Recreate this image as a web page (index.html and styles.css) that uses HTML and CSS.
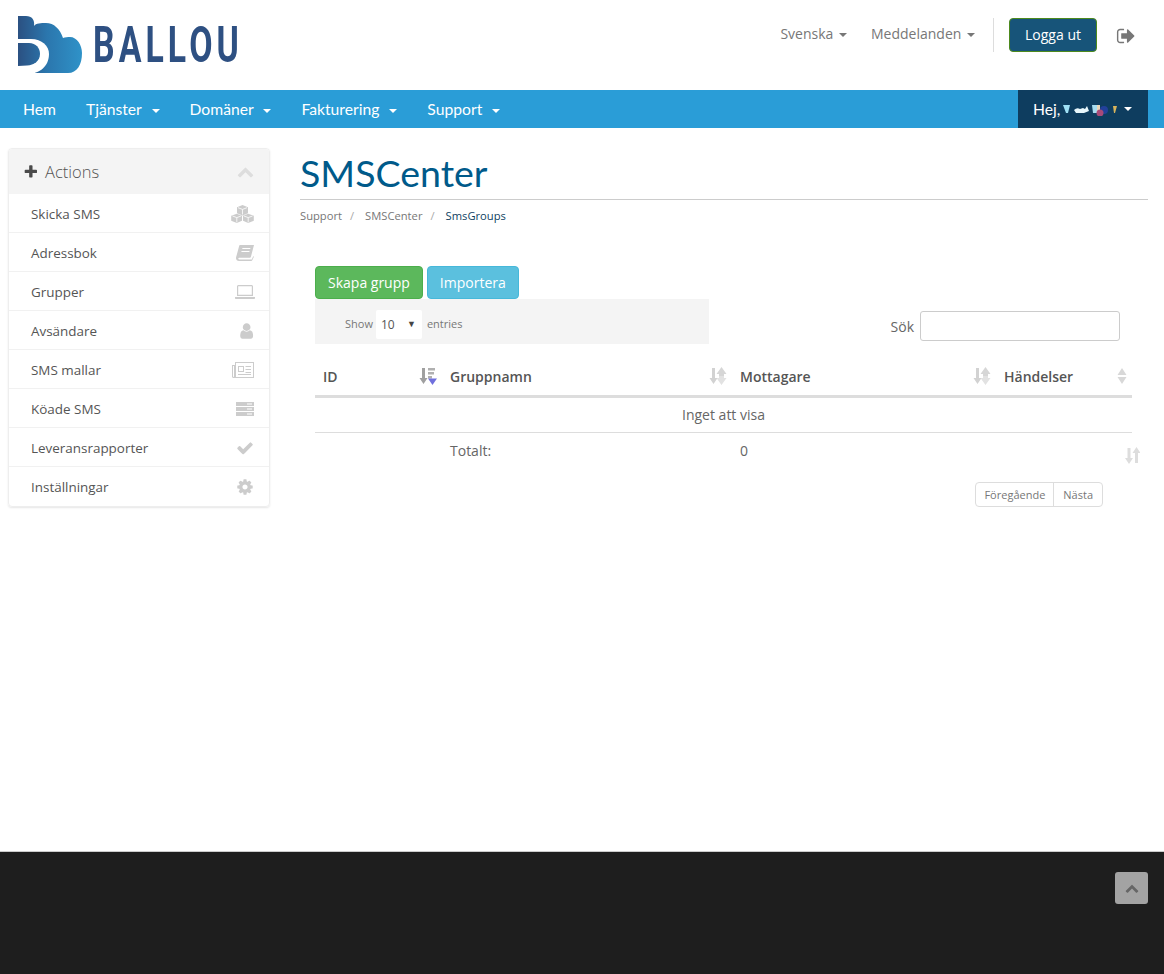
FILE: index.html
```html
<!DOCTYPE html>
<html lang="sv">
<head>
<meta charset="utf-8">
<title>SMSCenter</title>
<link rel="stylesheet" href="styles.css">
</head>
<body>
<svg class="defs" width="0" height="0" aria-hidden="true">
  <defs>
    <linearGradient id="lg" gradientUnits="userSpaceOnUse" x1="0" x2="66" y1="0" y2="0">
      <stop offset="0" stop-color="#2b4f80"/>
      <stop offset="0.45" stop-color="#2b76ad"/>
      <stop offset="1" stop-color="#2f93c9"/>
    </linearGradient>
    <symbol id="sort-both" viewBox="0 0 18 18">
      <path d="M3 1h3v10h2.500l-4 6-4-6H3z" fill="#d2d2d2"/>
      <path d="M12.500 0l5 7h-2.500v2H10V7H7.500z" fill="#d6d6d6"/>
      <path d="M12.500 18l5-7h-2.500V9H10v2H7.500z" fill="#e2e2e2"/>
    </symbol>
    <symbol id="sort-amount" viewBox="0 0 18 18">
      <path d="M3 1h3v10h2.500l-4 6-4-6H3z" fill="#a0a0a0"/>
      <path d="M9 1h7v2.500H9zM9 5h6v2.500H9zM9 9h4v2.500H9z" fill="#b0b0b0"/>
      <path d="M9 11.500h9L13.500 18z" fill="#7070dd"/>
    </symbol>
  </defs>
</svg>

<header class="topbar">
  <a class="logo" href="#">
    <svg class="logo-mark" viewBox="0 0 66 58" aria-hidden="true">
      <path fill="url(#lg)" d="M1 0H9C15 0 18 4 17 10C19 7 24 7 29 7C37 7 43 13 46 22C48 21 51 21 53 21C60 21 65 29 65 37C65 49 60 57 51 57H17C10 57 5 55 1 52Z"/>
      <path fill="#fff" d="M0 23H14C25 23 32 30 32 38C32 50 23 58 10 58H0Z"/>
      <path fill="url(#lg)" d="M1 27H12C19 27 23 32 23 38C23 45 17 49 10 49.500L1 50Z"/>
    </svg>
    <span class="logo-text">BALLOU</span>
  </a>
  <div class="top-right">
    <a class="top-link" href="#">Svenska <i class="caret"></i></a>
    <a class="top-link" href="#">Meddelanden <i class="caret"></i></a>
    <span class="top-divider"></span>
    <a class="logout" href="#">Logga ut</a>
    <svg class="signout" viewBox="0 0 1664 1792" aria-hidden="true"><path d="M704 1440q0 4 1 20t.5 26.500-3 23.500-10 19.500-20.500 6.500h-320q-119 0-203.500-84.500t-84.500-203.500v-704q0-119 84.500-203.500t203.500-84.500h320q13 0 22.500 9.500t9.500 22.500q0 4 1 20t.5 26.500-3 23.500-10 19.500-20.500 6.500h-320q-66 0-113 47t-47 113v704q0 66 47 113t113 47h312l11.500 1 11.500 3 8 5.500 7 9 2 13.500zm928-544q0 26-19 45l-544 544q-19 19-45 19t-45-19-19-45v-288h-448q-26 0-45-19t-19-45v-384q0-26 19-45t45-19h448v-288q0-26 19-45t45-19 45 19l544 544q19 19 19 45z"/></svg>
  </div>
</header>

<nav class="mainnav">
  <ul class="nav-list">
    <li><a href="#">Hem</a></li>
    <li><a href="#">Tjänster <i class="caret"></i></a></li>
    <li><a href="#">Domäner <i class="caret"></i></a></li>
    <li><a href="#">Fakturering <i class="caret"></i></a></li>
    <li><a href="#">Support <i class="caret"></i></a></li>
  </ul>
  <a class="hello" href="#">Hej,
    <svg class="blur-name" viewBox="0 0 56 13" aria-hidden="true">
      <path d="M0 2l7 0-2 8-2 0z" fill="#9fe0f5"/>
      <path d="M11 7q3-3 6-1l3-1 2 1 2-3 2 5-5 2-8 0z" fill="#e8f7fc"/>
      <path d="M29 2h5v8h-4z" fill="#a6dcf0"/>
      <path d="M34 2h3v7h-3z" fill="#e9d6b8"/>
      <circle cx="41" cy="7" r="4" fill="#22409a"/>
      <circle cx="37" cy="10" r="3.500" fill="#a84a78"/>
      <path d="M50 3h4l-2 7-1 0z" fill="#d8b45c"/>
    </svg>
    <i class="caret"></i></a>
</nav>

<main class="page">
  <aside class="side">
    <div class="panel-head">
      <svg class="ic-plus" viewBox="0 0 1600 1792" aria-hidden="true"><path d="M1600 736v192q0 40-28 68t-68 28h-416v416q0 40-28 68t-68 28h-192q-40 0-68-28t-28-68v-416h-416q-40 0-68-28t-28-68v-192q0-40 28-68t68-28h416v-416q0-40 28-68t68-28h192q40 0 68 28t28 68v416h416q40 0 68 28t28 68z"/></svg>
      <span class="panel-title">Actions</span>
      <svg class="ic-up" viewBox="0 0 1792 1792" aria-hidden="true"><path d="M1683 1331l-166 165q-19 19-45 19t-45-19l-531-531-531 531q-19 19-45 19t-45-19l-166-165q-19-19-19-45.500t19-45.500l742-741q19-19 45-19t45 19l742 741q19 19 19 45.500t-19 45.500z"/></svg>
    </div>
    <a class="side-item" href="#">Skicka SMS
      <svg class="ic" viewBox="0 0 23 18" aria-hidden="true"><path d="M11.500 0l5.500 2.200v6L11.500 10.400 6 8.200v-6zM5.800 8.800l5.200 2v5L5.800 18 .2 15.800v-5zM17.200 8.800l5.600 2v5L17.200 18 12 15.800v-5z"/><path d="M7 2.700l4.500 1.700L16 2.700M11.500 4.400V9.500M1.500 11l4.300 1.600L10 11M5.800 12.600v4.800M13 11l4.200 1.600 4.300-1.600M17.200 12.600v4.800" fill="none" stroke="#fff" stroke-width=".8"/></svg>
    </a>
    <a class="side-item" href="#">Adressbok
      <svg class="ic ic-book" viewBox="0 0 18 16" aria-hidden="true"><path d="M4 0h14l-3 11.500c-.2.800-.7 1.300-1.500 1.300H3.300c-.6 0-1 .3-1 .8s.4.900 1 .9h12.500L17.300 11l.5 1-1.700 3.500c-.2.300-.5.500-.9.500H3C1.300 16 0 14.800 0 13.300c0-.6.100-1.100.3-1.700L3 1.500C3.200.600 3.500 0 4 0zm2.500 3l-.3 1h8l.3-1zm-.9 3l-.3 1h8l.3-1z"/></svg>
    </a>
    <a class="side-item" href="#">Grupper
      <svg class="ic ic-laptop" viewBox="0 0 20 14" aria-hidden="true"><path d="M3.500 0h13c.8 0 1.500.7 1.500 1.500V11H2V1.500C2 .7 2.700 0 3.500 0zm-.3 1.200v8.600h13.600V1.200zM0 12h20v1c0 .6-.4 1-1 1H1c-.6 0-1-.4-1-1z"/></svg>
    </a>
    <a class="side-item" href="#">Avsändare
      <svg class="ic ic-user" viewBox="0 0 1408 1792" aria-hidden="true"><path d="M1408 1399q0 109-62.500 187t-150.500 78h-854q-88 0-150.500-78t-62.500-187q0-85 8.500-160.500t31.500-152 58.500-131 94-89 134.500-34.500q131 128 313 128t313-128q76 0 134.500 34.500t94 89 58.500 131 31.500 152 8.500 160.500zm-256-887q0 159-112.500 271.500t-271.500 112.500-271.500-112.500-112.500-271.500 112.500-271.500 271.500-112.500 271.500 112.500 112.500 271.500z"/></svg>
    </a>
    <a class="side-item" href="#">SMS mallar
      <svg class="ic ic-news" viewBox="0 0 22 16" aria-hidden="true"><path d="M3 0h19v16H1.500C.7 16 0 15.300 0 14.500V3h3zm1 1v13.500c0 .2-.1.400-.2.500H21V1zM1 4v10.500c0 .3.200.5.500.5s.500-.2.500-.5V4zm5 0h6v6H6zm1 1v4h4V5zm6.500-1H19v1h-5.500zm0 3H19v1h-5.500zm0 3H19v1h-5.500zM6 12h13v1H6z"/></svg>
    </a>
    <a class="side-item" href="#">Köade SMS
      <svg class="ic ic-server" viewBox="0 0 18 14" aria-hidden="true"><path d="M0 0h18v4H0zm0 5h18v4H0zm0 5h18v4H0z"/><path d="M11 1.500h5v1h-5zm0 5h5v1h-5zm0 5h5v1h-5z" fill="#fff"/></svg>
    </a>
    <a class="side-item" href="#">Leveransrapporter
      <svg class="ic ic-check" viewBox="0 0 1792 1792" aria-hidden="true"><path d="M1671 566q0 40-28 68l-724 724-136 136q-28 28-68 28t-68-28l-136-136-362-362q-28-28-28-68t28-68l136-136q28-28 68-28t68 28l294 295 656-657q28-28 68-28t68 28l136 136q28 28 28 68z"/></svg>
    </a>
    <a class="side-item" href="#">Inställningar
      <svg class="ic ic-cog" viewBox="0 0 1792 1792" aria-hidden="true"><path d="M1152 896q0-106-75-181t-181-75-181 75-75 181 75 181 181 75 181-75 75-181zm512-109v222q0 12-8 23t-20 13l-185 28q-19 54-39 91 35 50 107 138 10 12 10 25t-9 23q-27 37-99 108t-94 71q-12 0-26-9l-138-108q-44 23-91 38-16 136-29 186-7 28-36 28h-222q-14 0-24.500-8.500t-11.500-21.500l-28-184q-49-16-90-37l-141 107q-10 9-25 9-14 0-25-11-126-114-165-168-7-10-7-23 0-12 8-23 15-21 51-66.500t54-70.500q-27-50-41-99l-183-27q-13-2-21-12.500t-8-23.500v-222q0-12 8-23t19-13l186-28q14-46 39-92-40-57-107-138-10-12-10-24 0-10 9-23 26-36 98.500-107.500t94.500-71.500q13 0 26 10l138 107q44-23 91-38 16-136 29-186 7-28 36-28h222q14 0 24.500 8.500t11.500 21.500l28 184q49 16 90 37l142-107q9-9 24-9 13 0 25 10 129 119 165 170 7 8 7 22 0 12-8 23-15 21-51 66.500t-54 70.500q26 50 41 98l183 28q13 2 21 12.500t8 23.500z"/></svg>
    </a>
  </aside>

  <section class="content">
    <h1 class="title">SMSCenter</h1>
    <ol class="crumbs">
      <li><a href="#">Support</a></li>
      <li><a href="#">SMSCenter</a></li>
      <li class="crumb-current">SmsGroups</li>
    </ol>

    <div class="card">
      <div class="btn-row">
        <a class="btn btn-green" href="#">Skapa grupp</a>
        <a class="btn btn-cyan" href="#">Importera</a>
      </div>
      <div class="tools">
        <div class="length">
          <span>Show</span>
          <span class="select-wrap">
            <select class="select" aria-label="entries"><option>10</option><option>25</option></select>
          </span>
          <span>entries</span>
        </div>
        <label class="search">Sök <input class="search-input" type="text"></label>
      </div>

      <table class="grid">
        <thead>
          <tr>
            <th class="col-id"><span class="th-in">ID <svg class="sort"><use href="#sort-amount"/></svg></span></th>
            <th class="col-name"><span class="th-in">Gruppnamn <svg class="sort"><use href="#sort-both"/></svg></span></th>
            <th class="col-recv"><span class="th-in">Mottagare <svg class="sort"><use href="#sort-both"/></svg></span></th>
            <th class="col-act"><span class="th-in">Händelser
              <svg class="sort-plain" viewBox="0 0 10 16" aria-hidden="true"><path d="M5 0l4.500 7H.5zM5 16L.5 9h9z"/></svg></span></th>
          </tr>
        </thead>
        <tbody>
          <tr><td class="empty" colspan="4">Inget att visa</td></tr>
        </tbody>
        <tfoot>
          <tr>
            <td></td>
            <td>Totalt:</td>
            <td>0</td>
            <td class="foot-last"><svg class="sort-foot" viewBox="0 0 15 17" aria-hidden="true"><path d="M2.500 1h3v10H8l-4 6-4-6h2.500zM11.500 0l4 6H13v10h-3V6H7.500z"/></svg></td>
          </tr>
        </tfoot>
      </table>

      <div class="pager-row">
        <div class="pager">
          <a href="#">Föregående</a>
          <a href="#">Nästa</a>
        </div>
      </div>
    </div>
  </section>
</main>

<footer class="foot">
  <a class="totop" href="#" aria-label="Till toppen">
    <svg viewBox="0 0 1792 1792" aria-hidden="true"><path d="M1683 1331l-166 165q-19 19-45 19t-45-19l-531-531-531 531q-19 19-45 19t-45-19l-166-165q-19-19-19-45.500t19-45.500l742-741q19-19 45-19t45 19l742 741q19 19 19 45.500t-19 45.500z"/></svg>
  </a>
</footer>
</body>
</html>
```

FILE: styles.css
```css
* { box-sizing: border-box; }
html, body { margin: 0; padding: 0; }
body {
  min-height: 974px;
  display: flex;
  flex-direction: column;
  font-family: "Open Sans", "Liberation Sans", sans-serif;
  font-size: 14px;
  color: #666;
  background: #fff;
}
a { text-decoration: none; color: inherit; }
.defs { position: absolute; }

.caret {
  display: inline-block;
  width: 0;
  height: 0;
  margin-left: 2px;
  vertical-align: middle;
  border-top: 4px solid currentColor;
  border-left: 4px solid transparent;
  border-right: 4px solid transparent;
}

/* top bar */
.topbar {
  height: 90px;
  display: flex;
  justify-content: space-between;
  padding-left: 17px;
  padding-right: 29px;
}
.logo { display: flex; align-items: flex-start; padding-top: 16px; }
.logo-mark { width: 66px; height: 58px; }
.logo-text {
  display: inline-block;
  margin: 1px 0 0 10px;
  width: 143px;
  font-family: "Roboto", "Liberation Sans", sans-serif;
  font-weight: 700;
  font-size: 50px;
  line-height: 56px;
  letter-spacing: 6px;
  color: #2e5082;
  transform: scaleX(.677);
  transform-origin: left center;
  white-space: nowrap;
}
.top-right { display: flex; align-items: center; height: 70px; }
.top-link { color: #777; margin: 0 24px 3px 0; white-space: nowrap; }
.top-link + .top-link { margin-right: 18px; }
.top-divider { width: 1px; height: 34px; background: #ddd; margin-right: 15px; }
.logout {
  width: 88px;
  height: 34px;
  line-height: 32px;
  text-align: center;
  color: #fff;
  background: #175479;
  border: 1px solid #4d8a1d;
  border-radius: 4px;
  margin-right: 19px;
}
.signout { width: 19px; height: 20px; fill: #777; margin-top: 1px; }

/* main nav */
.mainnav {
  height: 38px;
  background: #2a9dd7;
  display: flex;
  justify-content: space-between;
  padding-right: 16px;
  color: #fff;
  font-family: "Lato", "Liberation Sans", sans-serif;
  font-size: 15.700px;
}
.nav-list { list-style: none; margin: 0; padding: 0; display: flex; }
.nav-list a { display: block; padding: 0 15px; line-height: 38px; white-space: nowrap; }
.nav-list li:first-child a { padding-left: 23px; }
.nav-list .caret { margin-left: 6px; }
.hello {
  width: 130px;
  padding-left: 15px;
  background: #0e3d5f;
  display: flex;
  align-items: center;
  gap: 2px;
  white-space: nowrap;
}
.blur-name { width: 56px; height: 13px; margin-left: 1px; filter: blur(.4px); }
.hello .caret { margin-left: 3px; }

/* page */
.page {
  flex: 1;
  display: flex;
  align-items: flex-start;
  padding: 21px 16px 0 8px;
  gap: 30px;
}
.side {
  width: 262px;
  flex: none;
  margin-top: -1px;
  border: 1px solid #eee;
  border-radius: 4px;
  box-shadow: 0 1px 2px rgba(0, 0, 0, .1);
  overflow: hidden;
}
.panel-head {
  height: 45px;
  background: #f4f4f4;
  display: flex;
  align-items: center;
  padding: 0 15px 0 14px;
}
.ic-plus { width: 14px; height: 16px; fill: #4a4a4a; margin-right: 8px; }
.panel-title { font-weight: 300; font-size: 16.500px; color: #555; flex: 1; }
.ic-up { width: 17px; height: 17px; fill: #ddd; }
.side-item {
  height: 39px;
  border-bottom: 1px solid #f1f1f1;
  display: flex;
  align-items: center;
  justify-content: space-between;
  padding: 2px 15px 0 22px;
  font-size: 13.450px;
  color: #555;
}
.side-item:last-child { border-bottom-color: transparent; }
.ic { width: 23px; height: 18px; fill: #ccc; flex: none; }
.ic-book { width: 18px; height: 16px; }
.ic-laptop { width: 20px; height: 14px; margin-right: -1px; }
.ic-user { width: 16px; }
.ic-news { width: 22px; height: 16px; }
.ic-server { width: 18px; height: 14px; }
.ic-check { width: 18px; height: 18px; }
.ic-cog { width: 18px; height: 18px; }

.content { flex: 1; min-width: 0; }
.title {
  margin: 0;
  height: 51px;
  border-bottom: 1px solid #ccc;
  font-family: "Lato", "Liberation Sans", sans-serif;
  font-weight: 400;
  font-size: 37.500px;
  line-height: 48px;
  color: #005a8a;
}
.crumbs {
  list-style: none;
  margin: 8px 0 0;
  padding: 0;
  display: flex;
  font-size: 11.200px;
  line-height: 15px;
  color: #777;
}
.crumbs li + li::before { content: "/"; color: #aaa; padding: 0 11px 0 8px; }
.crumb-current { color: #0f3f63; }

.card { padding: 43px 16px 0 15px; }
.btn-row { display: flex; gap: 4px; }
.btn {
  height: 33px;
  padding: 0 12px;
  line-height: 31px;
  border-radius: 4px;
  color: #fff;
  white-space: nowrap;
}
.btn-green { background: #5cb85c; border: 1px solid #4cae4c; }
.btn-cyan { background: #5bc0de; border: 1px solid #46b8da; }

.tools {
  display: flex;
  justify-content: space-between;
  align-items: flex-start;
  height: 61px;
  padding-right: 12px;
}
.length {
  width: 394px;
  height: 45px;
  background: #f4f4f4;
  display: flex;
  align-items: center;
  gap: 3px;
  padding-left: 30px;
  padding-top: 4px;
  font-size: 11px;
  color: #777;
}
.select-wrap { position: relative; display: block; margin: 2px 2px 0 0; }
.select-wrap::after {
  content: "▼";
  position: absolute;
  right: 6px;
  top: 8px;
  font-size: 9px;
  line-height: 12px;
  color: #444;
  pointer-events: none;
}
.select {
  display: block;
  appearance: none;
  width: 46px;
  height: 29px;
  padding: 0 5px;
  border: 0;
  border-radius: 2px;
  background: #fff;
  font-family: inherit;
  font-size: 12px;
  color: #555;
}
.search { display: flex; align-items: center; gap: 6px; margin-top: 12px; color: #666; }
.search-input {
  width: 200px;
  height: 30px;
  border: 1px solid #ccc;
  border-radius: 3px;
  background: #fff;
}

.grid { width: 817px; border-collapse: collapse; table-layout: fixed; }
.col-id { width: 127px; }
.col-name { width: 290px; }
.col-recv { width: 264px; }
.col-act { width: 136px; }
.grid th {
  height: 36px;
  padding: 0 2px 2px 8px;
  text-align: left;
  font-weight: 600;
  color: #555;
  border-bottom: 3px solid #ddd;
}
.th-in { display: flex; justify-content: space-between; align-items: center; }
.sort { width: 18px; height: 18px; flex: none; margin-right: 3px; }
.sort-plain { width: 10px; height: 16px; fill: #d8d8d8; margin-right: 3px; }
.grid td { padding: 0 8px; }
.empty {
  height: 36px;
  text-align: center;
  border-bottom: 1px solid #ddd;
}
.grid tfoot td { height: 37px; padding-bottom: 1px; }
.foot-last { position: relative; }
.sort-foot {
  position: absolute;
  right: -8px;
  top: 14px;
  width: 15px;
  height: 17px;
  fill: #ddd;
}
.pager-row { display: flex; justify-content: flex-end; padding: 13px 29px 0 0; }
.pager {
  display: flex;
  height: 25px;
  border: 1px solid #ddd;
  border-radius: 4px;
  font-size: 11px;
  line-height: 23px;
  color: #777;
}
.pager a { padding: 0 8px; }
.pager a + a { padding: 0 9px; border-left: 1px solid #ddd; }

.foot {
  height: 123px;
  background: #1e1e1e;
  border-top: 1px solid #ccc;
  display: flex;
  justify-content: flex-end;
  align-items: flex-start;
  padding: 20px 16px 0 0;
}
.totop {
  width: 33px;
  height: 32px;
  border-radius: 3px;
  background: #a3a3a3;
  display: flex;
  align-items: center;
  justify-content: center;
}
.totop svg { width: 14px; height: 14px; fill: #666; }
```
